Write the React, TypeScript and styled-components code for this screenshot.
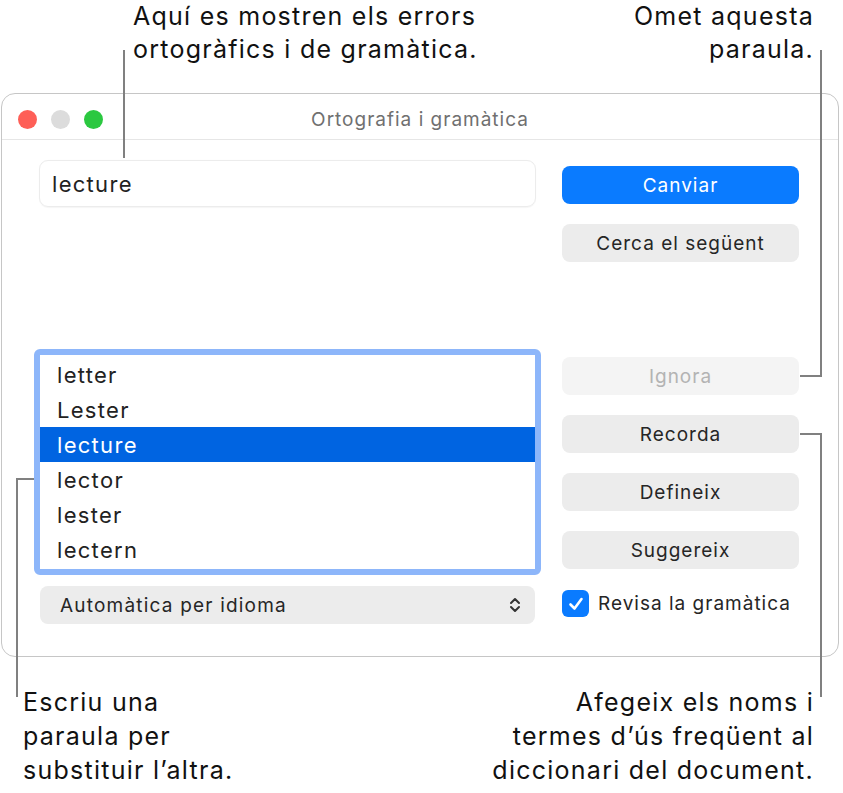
import React from "react";
import styled, { createGlobalStyle } from "styled-components";

const Global = createGlobalStyle`
  html, body { margin: 0; padding: 0; background: #ffffff; }
  body { font-family: Inter, "Noto Sans", "Liberation Sans", sans-serif; color: #1d1d1f; }
`;

const Page = styled.div`
  position: relative;
  width: 843px;
  height: 793px;
  overflow: hidden;
  display: flex;
  flex-direction: column;
`;

const TopNotes = styled.div`
  height: 93px;
  box-sizing: border-box;
  display: flex;
  justify-content: space-between;
  align-items: flex-start;
  padding: 0 29px 0 133px;
`;

const Note = styled.p<{ $align?: "left" | "right" }>`
  margin: 0;
  font-size: 25px;
  line-height: 33px;
  color: #111;
  text-align: ${(p) => p.$align ?? "left"};
  letter-spacing: 1.25px;
`;

const Window = styled.div`
  margin-left: 1px;
  width: 838px;
  height: 564px;
  box-sizing: border-box;
  border: 1.5px solid #c6c6c6;
  border-radius: 14px;
  display: flex;
  flex-direction: column;
  background: #fff;
`;

const TitleBar = styled.div`
  position: relative;
  height: 45px;
  flex: none;
  border-bottom: 1px solid #e6e6e6;
  display: flex;
  align-items: center;
  justify-content: center;
`;

const Lights = styled.div`
  position: absolute;
  left: 16px;
  top: 16px;
  display: flex;
  gap: 14px;
`;

const Light = styled.span<{ $c: string }>`
  width: 19px;
  height: 19px;
  border-radius: 50%;
  background: ${(p) => p.$c};
`;

const Title = styled.div`
  margin-top: 5px;
  font-size: 19px;
  color: #707070;
  letter-spacing: 1px;
`;

const Body = styled.div`
  flex: 1;
  display: grid;
  grid-template-columns: 507px 237px;
  column-gap: 21px;
  padding-left: 32px;
`;

const LeftCol = styled.div`
  display: flex;
  flex-direction: column;
  padding-top: 20px;
`;

const RightCol = styled.div`
  display: flex;
  flex-direction: column;
  padding-top: 26px;
`;

const TextField = styled.div`
  margin: 0 5px;
  height: 47px;
  box-sizing: border-box;
  border: 1px solid #ececec;
  border-radius: 9px;
  box-shadow: 0 0.5px 1px rgba(0, 0, 0, 0.04);
  display: flex;
  align-items: center;
  padding-left: 12px;
  font-size: 22px;
  letter-spacing: 1.3px;
  color: #222;
`;

const List = styled.div`
  margin-top: 142px;
  height: 226px;
  box-sizing: border-box;
  border: 6px solid #8db6fa;
  border-radius: 6px;
  padding-top: 2px;
  background: #fff;
`;

const Row = styled.div<{ $sel?: boolean }>`
  height: 35px;
  display: flex;
  align-items: center;
  padding-left: 17px;
  font-size: 22px;
  letter-spacing: 1.3px;
  color: ${(p) => (p.$sel ? "#fff" : "#222")};
  background: ${(p) => (p.$sel ? "#0064e1" : "transparent")};
`;

const Popup = styled.div`
  margin: 11px 6px 0 6px;
  height: 38px;
  border-radius: 8px;
  background: #ececec;
  display: flex;
  align-items: center;
  justify-content: space-between;
  padding: 0 14px 0 20px;
  font-size: 19px;
  letter-spacing: 1.2px;
  color: #262626;
`;

const Button = styled.div<{ $kind?: "primary" | "normal" | "disabled"; $gap?: number }>`
  height: 38px;
  margin-top: ${(p) => p.$gap ?? 0}px;
  border-radius: 8px;
  display: flex;
  align-items: center;
  justify-content: center;
  font-size: 19px;
  letter-spacing: 1px;
  background: ${(p) =>
    p.$kind === "primary" ? "#0a7bff" : p.$kind === "disabled" ? "#f4f4f4" : "#ececec"};
  color: ${(p) =>
    p.$kind === "primary" ? "#ffffff" : p.$kind === "disabled" ? "#b3b3b3" : "#262626"};
`;

const CheckRow = styled.label`
  margin-top: 21px;
  display: flex;
  align-items: center;
  gap: 9px;
  font-size: 19px;
  letter-spacing: 1px;
  color: #262626;
`;

const CheckBox = styled.span`
  width: 27px;
  height: 27px;
  border-radius: 6px;
  background: #0a7bff;
  display: flex;
  align-items: center;
  justify-content: center;
`;

const BottomNotes = styled.div`
  flex: 1;
  display: flex;
  justify-content: space-between;
  align-items: flex-start;
  padding: 28px 29px 0 23px;

  & > p {
    line-height: 34px;
  }
`;

const Leaders = styled.svg`
  position: absolute;
  left: 0;
  top: 0;
  pointer-events: none;
`;

export default function App() {
  return (
    <Page>
      <Global />
      <TopNotes>
        <Note>
          Aquí es mostren els errors
          <br />
          ortogràfics i de gramàtica.
        </Note>
        <Note $align="right">
          Omet aquesta
          <br />
          paraula.
        </Note>
      </TopNotes>
      <Window>
        <TitleBar>
          <Lights>
            <Light $c="#fe5f57" />
            <Light $c="#dcdcdc" />
            <Light $c="#2bc840" />
          </Lights>
          <Title>Ortografia i gramàtica</Title>
        </TitleBar>
        <Body>
          <LeftCol>
            <TextField>lecture</TextField>
            <List>
              <Row>letter</Row>
              <Row>Lester</Row>
              <Row $sel>lecture</Row>
              <Row>lector</Row>
              <Row>lester</Row>
              <Row>lectern</Row>
            </List>
            <Popup>
              <span>Automàtica per idioma</span>
              <svg width="12" height="18" viewBox="0 0 12 18">
                <path
                  d="M2 7 L6 3 L10 7 M2 11 L6 15 L10 11"
                  fill="none"
                  stroke="#333"
                  strokeWidth="2"
                  strokeLinecap="round"
                  strokeLinejoin="round"
                />
              </svg>
            </Popup>
          </LeftCol>
          <RightCol>
            <Button $kind="primary">Canviar</Button>
            <Button $gap={20}>Cerca el següent</Button>
            <Button $kind="disabled" $gap={95}>Ignora</Button>
            <Button $gap={20}>Recorda</Button>
            <Button $gap={20}>Defineix</Button>
            <Button $gap={20}>Suggereix</Button>
            <CheckRow>
              <CheckBox>
                <svg width="18" height="18" viewBox="0 0 18 18">
                  <path
                    d="M3.5 9.5 L7.5 13.5 L14.5 4"
                    fill="none"
                    stroke="#fff"
                    strokeWidth="2.6"
                    strokeLinecap="round"
                    strokeLinejoin="round"
                  />
                </svg>
              </CheckBox>
              Revisa la gramàtica
            </CheckRow>
          </RightCol>
        </Body>
      </Window>
      <BottomNotes>
        <Note>
          Escriu una
          <br />
          paraula per
          <br />
          substituir l’altra.
        </Note>
        <Note $align="right">
          Afegeix els noms i
          <br />
          termes d’ús freqüent al
          <br />
          diccionari del document.
        </Note>
      </BottomNotes>
      <Leaders width="843" height="793" viewBox="0 0 843 793">
        <g fill="none" stroke="#808080" strokeWidth="2">
          <path d="M124 50 V158" />
          <path d="M821 50 V376 H800" />
          <path d="M800 434 H821 V697" />
          <path d="M34 479 H17 V697" />
        </g>
      </Leaders>
    </Page>
  );
}
